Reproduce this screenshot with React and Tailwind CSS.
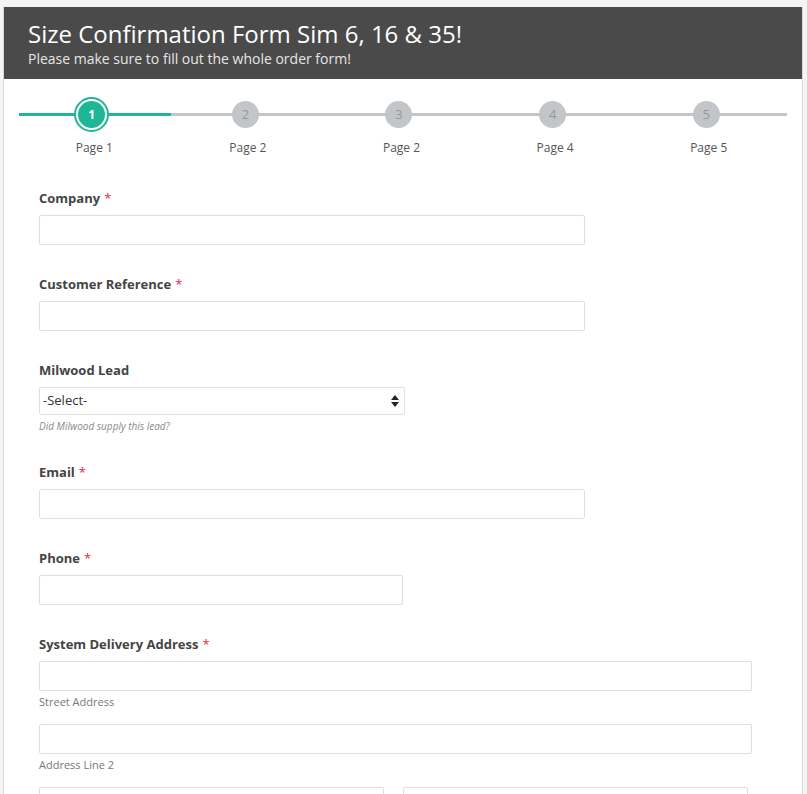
const steps = [
  { n: 1, label: "Page 1", active: true },
  { n: 2, label: "Page 2" },
  { n: 3, label: "Page 2" },
  { n: 4, label: "Page 4" },
  { n: 5, label: "Page 5" },
];

function Label({ children, required }) {
  return (
    <label className="block text-[13px] leading-[20px] font-bold text-[#444]">
      {children}
      {required && <span className="ml-[4px] text-[#e0293f] font-normal">*</span>}
    </label>
  );
}

function TextInput({ width }) {
  return (
    <input
      type="text"
      className={`block h-[30px] ${width} border border-[#dedede] rounded-[2px] bg-white px-2 text-[13px] outline-none`}
    />
  );
}

function Field({ label, required, width, children }) {
  return (
    <div className="mb-[29px]">
      <Label required={required}>{label}</Label>
      <div className="mt-[7px]">{children || <TextInput width={width} />}</div>
    </div>
  );
}

export default function App() {
  return (
    <div className="min-h-screen bg-[#f4f4f4] pt-[7px]" style={{ fontFamily: '"Open Sans", "Liberation Sans", sans-serif' }}>
      <div className="ml-[3px] w-[800px] border-x border-[#d8d8d8] bg-white min-h-[900px]">
        {/* Header */}
        <div className="bg-[#4a4a4a] pl-[24px] pt-[12px] pb-[10px]">
          <h1 className="text-[24px] leading-[30px] text-white">Size Confirmation Form Sim 6, 16 &amp; 35!</h1>
          <p className="text-[14px] leading-[20px] text-[#e6e6e6]">Please make sure to fill out the whole order form!</p>
        </div>

        {/* Stepper */}
        <div className="pl-[11px] pr-[19px] pt-[18px]">
          <div className="relative grid grid-cols-5">
            <div className="absolute left-[4px] right-[-4px] top-[16px] h-[3px] bg-[#c2c6c9]" />
            <div className="absolute left-[4px] top-[16px] h-[3px] w-[152px] bg-[#1fb597]" />
            {steps.map((s) => (
              <div key={s.n} className="relative flex flex-col items-center">
                <div className="h-[35px] flex items-center justify-center">
                  {s.active ? (
                    <div className="w-[35px] h-[35px] rounded-full border-[2px] border-[#1fb597] bg-white flex items-center justify-center">
                      <div className="w-[27px] h-[27px] rounded-full bg-[#1fb597] text-white text-[12px] font-bold flex items-center justify-center">
                        {s.n}
                      </div>
                    </div>
                  ) : (
                    <div className="w-[27px] h-[27px] rounded-full bg-[#c2c6c9] text-[#94979a] text-[13px] flex items-center justify-center">
                      {s.n}
                    </div>
                  )}
                </div>
                <div className="mt-[7px] pl-[5px] text-[12px] leading-[18px] text-[#555]">{s.label}</div>
              </div>
            ))}
          </div>
        </div>

        {/* Form */}
        <form className="pl-[35px] pt-[31px]">
          <Field label="Company" required width="w-[546px]" />
          <Field label="Customer Reference" required width="w-[546px]" />

          <div className="mb-[29px]">
            <Label>Milwood Lead</Label>
            <div className="mt-[7px] relative w-[366px]">
              <select className="block w-full h-[28px] appearance-none border border-[#dedede] rounded-[2px] bg-white pl-[3px] text-[13px] text-[#333] outline-none">
                <option>-Select-</option>
                <option>Yes</option>
                <option>No</option>
              </select>
              <svg className="pointer-events-none absolute right-[6px] top-[8px]" width="8" height="12" viewBox="0 0 8 12">
                <path d="M4 0 L8 5 H0 Z" fill="#222" />
                <path d="M0 7 H8 L4 12 Z" fill="#222" />
              </svg>
            </div>
            <p className="mt-[4px] text-[10px] leading-[14px] italic text-[#8a8a8a]">Did Milwood supply this lead?</p>
          </div>

          <Field label="Email" required width="w-[546px]" />
          <Field label="Phone" required width="w-[364px]" />

          <div>
            <Label required>System Delivery Address</Label>
            <div className="mt-[7px]">
              <TextInput width="w-[713px]" />
              <p className="mt-[3px] text-[11px] leading-[16px] text-[#777]">Street Address</p>
            </div>
            <div className="mt-[14px]">
              <TextInput width="w-[713px]" />
              <p className="mt-[3px] text-[11px] leading-[16px] text-[#777]">Address Line 2</p>
            </div>
            <div className="mt-[14px] flex gap-[19px]">
              <TextInput width="w-[345px]" />
              <TextInput width="w-[345px]" />
            </div>
          </div>
        </form>
      </div>
    </div>
  );
}
